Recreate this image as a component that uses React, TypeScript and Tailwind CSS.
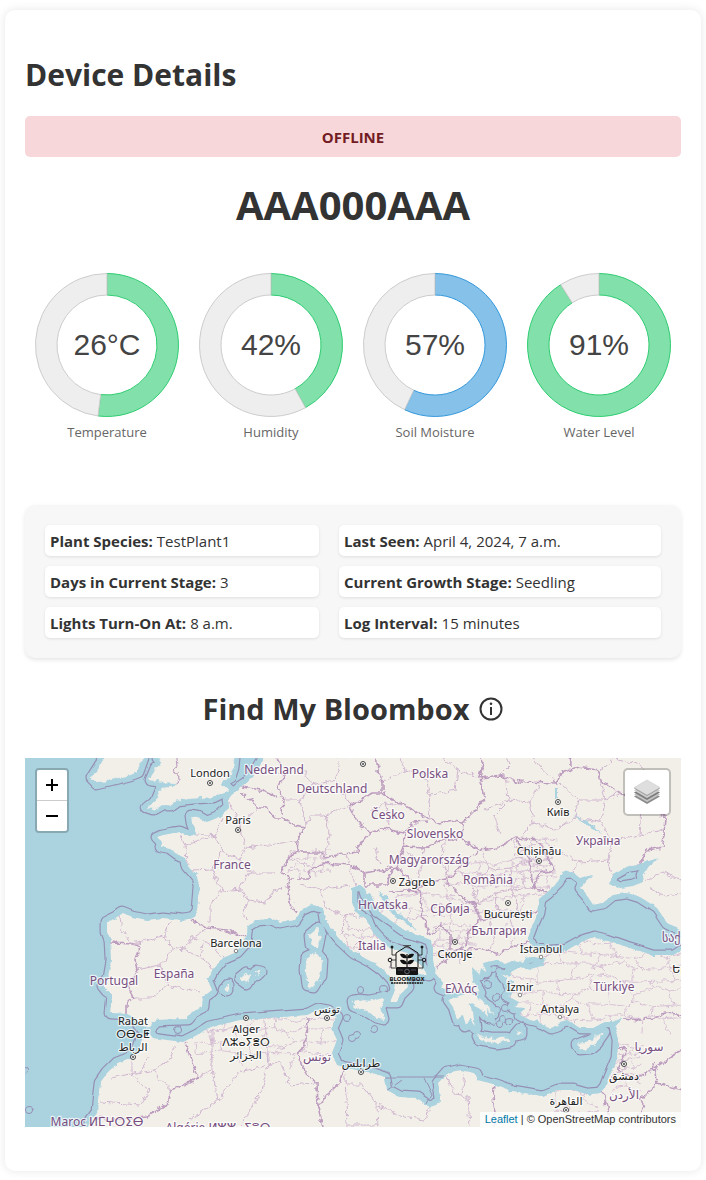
import React from "react";

type Point = [number, number];

const GREEN = { fill: "#82e0aa", stroke: "#2ecc71" };
const BLUE = { fill: "#85c1e9", stroke: "#3498db" };

const gauges = [
  { label: "Temperature", text: "26°C", share: 0.52, tone: GREEN },
  { label: "Humidity", text: "42%", share: 0.42, tone: GREEN },
  { label: "Soil Moisture", text: "57%", share: 0.57, tone: BLUE },
  { label: "Water Level", text: "91%", share: 0.91, tone: GREEN },
];

const details = [
  ["Plant Species:", "TestPlant1"],
  ["Last Seen:", "April 4, 2024, 7 a.m."],
  ["Days in Current Stage:", "3"],
  ["Current Growth Stage:", "Seedling"],
  ["Lights Turn-On At:", "8 a.m."],
  ["Log Interval:", "15 minutes"],
];

function ringSegment(from: number, to: number) {
  const outer = 71.5;
  const inner = 50;
  const at = (r: number, t: number) => {
    const a = t * Math.PI * 2;
    return `${(72 + r * Math.sin(a)).toFixed(2)} ${(72 - r * Math.cos(a)).toFixed(2)}`;
  };
  const large = to - from > 0.5 ? 1 : 0;
  return `M${at(outer, from)}A${outer} ${outer} 0 ${large} 1 ${at(outer, to)}L${at(inner, to)}A${inner} ${inner} 0 ${large} 0 ${at(inner, from)}Z`;
}

function Gauge({ label, text, share, tone }: (typeof gauges)[number]) {
  return (
    <div className="flex flex-col items-center">
      <div className="grid place-items-center">
        <svg viewBox="0 0 144 144" className="col-start-1 row-start-1 size-36" aria-hidden="true">
          <path d={ringSegment(0, share)} fill={tone.fill} stroke={tone.stroke} />
          <path d={ringSegment(share, 1)} fill="#eeeeee" stroke="#cccccc" />
        </svg>
        <span className="col-start-1 row-start-1 font-['Liberation_Sans',sans-serif] text-[30px] leading-8 text-[#444]">
          {text}
        </span>
      </div>
      <span className="mt-1 text-[13px] leading-[22px] text-[#666]">{label}</span>
    </div>
  );
}

/* ---- Map data ---- */

const ATLANTIC_MED =
  "M0 735L263 735 263 760 257 770 252 776 246 783 240 787 233 793 228 800 229 808 222 814 217 818 207 822 198 817 191 816 192 823 196 834 187 835 180 832 173 833 163 835 157 837 162 842 160 847 170 849 178 855 185 858 187 865 192 871 197 877 199 886 198 897 197 910 193 918 183 920 163 918 147 920 133 917 123 913 117 917 107 922 107 932 110 940 111 960 108 977 103 987 107 992 112 995 110 1013 127 1014 135 1018 142 1028 150 1027 157 1020 187 1019 193 1012 202 1007 203 997 212 990 208 980 213 970 223 958 237 952 246 942 248 926 258 920 270 919 280 923 295 920 302 910 313 905 323 908 325 920 330 928 340 940 353 952 372 962 383 970 392 980 395 990 390 1002 397 1002 400 995 408 987 407 978 412 974 420 974 428 976 422 966 407 953 390 948 380 940 372 931 368 920 357 913 352 903 352 888 360 885 364 888 366 895 370 893 374 904 379 912 390 920 407 932 423 937 430 940 433 948 433 960 435 973 443 983 440 988 450 992 465 994 455 997 448 1000 453 1007 457 1020 463 1015 466 1026 470 1019 475 1027 473 1012 469 1003 480 1009 488 1018 487 1008 482 1000 472 993 480 992 476 985 473 980 472 967 480 975 481 968 487 973 483 963 497 960 505 964 512 961 523 963 527 958 535 957 545 960 541 966 530 969 520 967 511 972 509 979 514 982 508 985 512 993 507 996 519 1002 514 1007 523 1008 520 1015 530 1020 538 1022 550 1029 558 1027 560 1022 567 1020 580 1028 593 1028 605 1022 613 1022 622 1018 615 1027 618 1040 617 1057 605 1087 600 1093 587 1094 573 1090 557 1090 542 1096 513 1091 497 1085 478 1080 475 1073 460 1070 447 1073 438 1083 440 1100 436 1105 430 1107 417 1098 400 1097 387 1090 385 1077 373 1073 347 1068 337 1065 332 1053 337 1040 332 1028 337 1017 328 1012 317 1010 307 1015 267 1018 240 1020 210 1027 197 1035 183 1042 167 1040 153 1038 148 1032 142 1038 138 1050 130 1058 117 1063 107 1073 100 1083 98 1100 97 1112 90 1122 78 1150 0 1150Z";
const BLACK_SEA =
  "M528 938L532 927 538 913 540 898 548 892 557 883 563 873 572 872 580 878 593 875 583 883 580 888 588 897 593 905 603 903 613 895 627 893 640 897 657 908 667 923 705 944 705 949 681 950 673 955 653 955 627 947 607 940 594 937 585 940 567 950 550 951 538 950 532 947Z";
const AZOV = "M610 883L613 875 627 867 637 865 658 858 650 865 642 875 643 882 633 886 620 888Z";
const ISLANDS = [
  "M170 740L158 758 163 765 155 768 150 780 167 782 177 783 173 787 162 788 157 800 147 808 153 810 162 805 170 805 177 800 197 798 213 797 228 790 220 782 230 777 233 768 236 740Z",
  "M104 740L102 762 92 778 97 783 110 780 130 775 138 772 143 758 143 740Z",
  "M318 928L320 936 317 949 311 944 310 935Z",
  "M307 957L316 953 322 960 321 975 314 987 308 986 306 970Z",
  "M353 1001L360 1000 370 1001 385 998 381 1008 384 1019 376 1017 365 1010 354 1006Z",
  "M240 978L246 973 251 976 247 983Z",
  "M255 971L260 972 257 975Z",
  "M225 989L228 985 228 991Z",
  "M478 1036L490 1038 508 1038 511 1041 497 1043 480 1040Z",
  "M577 1045L590 1040 604 1032 597 1042 590 1048 580 1049Z",
  "M516 1035L521 1029 521 1034Z",
  "M503 976L510 977 507 981Z",
  "M481 1001L489 1006 493 1014 485 1007Z",
];
const ISLETS: Point[] = [
  [496, 997], [497, 1010], [503, 1019], [492, 1022], [500, 1024], [510, 1021], [487, 1015],
  [506, 1008], [494, 970], [488, 984], [500, 972], [347, 1018], [356, 1035], [352, 1038],
  [374, 1029], [361, 990], [383, 990], [177, 1030], [30, 1110], [25, 1070],
];

const NATIONAL =
  "M110 943L133 944 140 948 135 960 137 970 128 987 133 998 127 1003 127 1014M192 920L207 928 227 930 240 935 250 936M240 792L250 800 258 808 267 808 275 818 283 818 290 823 303 827 298 840 297 852 290 857 280 872 290 878 288 887 292 907 297 913M278 750L279 765 283 777 278 787 283 800 282 815M242 787L260 790 277 797M375 750L378 770 382 782 382 793 373 793 363 800 350 805 355 818 370 833 383 828 403 833 413 823 427 822M382 793L392 799 403 805 410 807 427 818 440 823 453 820 463 822 477 808 485 797 480 778 483 763 477 750M370 833L358 847 357 852 325 857 320 852 297 852M290 878L308 878 311 870 323 863 350 865 365 873 397 867 403 847 405 833M365 873L365 885 387 885 390 875 397 867 417 887 440 880 450 878 465 862 480 850M403 847L427 848 440 840 460 838 480 850 497 848 515 838 537 840 548 857 553 870 540 873 533 888 530 860 515 838M390 892L405 890 420 892 423 917 430 935M417 887L421 895M445 880L462 897 475 905 480 920 500 917 520 916 538 912M480 920L470 930 465 945 457 950 436 968M457 950L480 948 500 955 510 946 530 943M533 888L548 892M463 822L462 838M480 778L500 775 520 782 557 783 562 773 577 767 598 770 603 783 620 792 642 806 665 817 663 847 647 850 640 864M570 750L571 767M430 935L441 925 450 935 450 950M185 1042L192 1063 198 1077 187 1083 172 1090 168 1103 147 1117 120 1120 95 1118M308 1017L307 1037 298 1055 305 1073 317 1083 318 1107 323 1127M343 1068L340 1083 328 1093 318 1107M495 1085L493 1097 495 1113 495 1130M623 1018L640 1020 653 1018 665 1013 690 1015M618 1048L627 1049 621 1062 617 1070M603 1093L611 1120M617 1070L635 1080 655 1068 681 1050M653 1063L657 1083 640 1100 645 1107 625 1127M657 1083L690 1092";
const REGIONAL =
  "M120 917L122 930 133 944M133 944L150 940 165 935 170 920M165 935L172 948 185 950 192 938 207 928M172 948L160 965 137 970M185 950L205 960 213 970M160 965L168 985 152 998 133 998M168 985L200 992M192 938L205 940 214 947 223 958M205 940L200 952 205 960M180 835L186 845 215 836M186 845L187 865M196 834L215 836 222 818M215 836L222 852 240 860 245 848 240 825 228 800M222 852L212 870 192 871M212 870L222 890 210 905 210 922M222 890L240 888 250 873 240 860M250 873L275 873M245 848L270 845 297 840M240 888L248 900 266 902 275 890 288 887M248 900L242 914 250 920M240 825L258 808M303 770L312 785 300 800 283 800M312 785L335 780 340 765 335 750M335 780L350 805M300 800L306 825M312 815L325 815 330 835 325 855M312 815L303 827M325 815L350 805M350 865L355 885M300 885L320 890 350 885M320 890L325 907M325 907L345 915 357 913M345 915L342 935M360 940L352 948M393 958L388 970M410 962L405 975M400 750L405 770 382 782M405 770L425 775 430 795 427 818M430 795L455 790 458 770 440 755M458 770L480 778M370 812L385 803 403 805M385 803L390 825M425 848L420 870 417 887M445 840L440 860 450 878M405 852L425 862 440 860M375 848L380 865M345 855L350 865M505 775L508 800 485 810M508 800L530 802 540 785M530 802L533 822 520 838M533 822L555 830 575 818 578 800 560 783M575 818L600 822 605 800 598 770M600 822L612 840 640 835 642 806M612 840L608 860 580 862 555 850M608 860L613 875M580 862L572 872M578 800L605 800 620 792M480 850L490 870 470 880 478 905M490 870L510 868 530 860M510 868L512 890 533 888M512 890L495 893 478 905M495 893L500 917M512 890L520 916M490 920L495 940 490 950M510 918L515 935 510 946M640 835L663 830M650 888L665 896 690 893M645 880L662 872 681 880M110 1078L140 1072 150 1058M132 1060L132 1075 150 1090 140 1105 100 1102M132 1075L155 1070 170 1060 175 1045M155 1070L160 1080 172 1090M212 1030L212 1070 198 1077M212 1070L218 1100 190 1120M218 1100L240 1072 265 1066M265 1020L268 1066 262 1090 240 1127M268 1066L280 1062 290 1085 315 1083M345 1075L347 1125M347 1085L362 1085 377 1105 378 1127M347 1125L378 1125M377 1105L400 1115 425 1120 430 1107M447 1075L455 1095 468 1097 470 1127M465 1075L462 1095M505 750L510 765 500 775M530 755L540 768 557 783M600 770L615 758 640 765 650 780 642 806M510 800L495 815 500 835";

/* Admin districts: a honeycomb whose corners are nudged by a fixed hash. */
const districts = [
  { x: 290, y: 852, w: 32, h: 20, size: 8 },
  { x: 510, y: 965, w: 165, h: 58, size: 16 },
  { x: 450, y: 862, w: 90, h: 54, size: 15 },
  { x: 515, y: 840, w: 34, h: 42, size: 8 },
  { x: 195, y: 1020, w: 140, h: 44, size: 14 },
  { x: 435, y: 925, w: 36, h: 32, size: 8 },
  { x: 395, y: 895, w: 50, h: 30, size: 15 },
  { x: 545, y: 940, w: 130, h: 25, size: 18 },
  { x: 345, y: 915, w: 35, h: 35, size: 14 },
  { x: 615, y: 1045, w: 18, h: 45, size: 9 },
  { x: 555, y: 1092, w: 40, h: 30, size: 14 },
];

function honeycomb({ x, y, w, h, size }: (typeof districts)[number]) {
  const corner = (c: number, r: number) => {
    const n = Math.sin(c * 127.1 + r * 311.7 + x) * 43758.5;
    const m = Math.sin(c * 269.5 + r * 183.3 + y) * 28001.8;
    const px = x + c * size + (n - Math.floor(n) - 0.5) * size * 0.8;
    const py = y + r * size * 0.8 + (m - Math.floor(m) - 0.5) * size * 0.6;
    return `${px.toFixed(1)} ${py.toFixed(1)}`;
  };
  let d = "";
  for (let r = 0; r * size * 0.8 <= h; r++) {
    for (let c = 0; c * size <= w; c++) {
      d += `M${corner(c, r)}L${corner(c + 1, r)}`;
      if ((c + r) % 2 === 0) d += `M${corner(c, r)}L${corner(c, r + 1)}`;
    }
  }
  return d;
}

const countries: [string, number, number][] = [
  ["Nederland", 274, 774], ["Deutschland", 332, 793], ["Polska", 430, 778], ["Česko", 388, 819],
  ["Slovensko", 435, 838], ["Magyarország", 429, 864], ["Україна", 598, 845], ["România", 488, 884],
  ["France", 232, 869], ["Hrvatska", 383, 909], ["Србија", 450, 913], ["България", 499, 935],
  ["Italia", 372, 950], ["España", 174, 978], ["Portugal", 114, 985], ["Ελλάς", 461, 993],
  ["Türkiye", 614, 991], ["تونس", 317, 1061], ["سوريا", 649, 1051], ["الأردن", 624, 1099],
  ["Maroc ⵍⵎⵖⵔⵉⴱ", 97, 1126], ["Algérie ⵍⵣⵣⴰⵢⴻⵔ", 218, 1132], ["საქართველო", 701, 942],
];
const cities: [string, number, number][] = [
  ["London", 210, 777], ["Paris", 238, 824], ["Berlin", 364, 757], ["Київ", 558, 816],
  ["Chișinău", 539, 855], ["Zagreb", 417, 886], ["București", 508, 918], ["Barcelona", 236, 947],
  ["Скопје", 455, 958], ["İstanbul", 541, 953], ["İzmir", 520, 991], ["Antalya", 560, 1013],
  ["Rabat", 133, 1025], ["ⵔⴱⴰⵟ", 133, 1038], ["الرباط", 133, 1051], ["Alger", 246, 1033],
  ["ⴷⵣⴰⵢⴻⵔ", 246, 1046], ["الجزائر", 246, 1059], ["تونس", 327, 1013], ["طرابلس", 361, 1067],
  ["دمشق", 624, 1080], ["القاهرة", 566, 1105], ["Երևան", 693, 973],
];
const capitals: Point[] = [
  [210, 783], [238, 830], [363, 764], [558, 802], [539, 861], [393, 881], [508, 903], [455, 942],
  [133, 1057], [246, 1018], [327, 1018], [361, 1072], [624, 1064], [566, 1110],
];
const towns: Point[] = [[236, 951], [541, 957], [520, 995], [560, 1017]];

function BloomboxMarker() {
  return (
    <g transform="translate(387 942)" stroke="#111" fill="none">
      <path d="M9 25V11L20 4l11 7v14" strokeWidth="1" />
      <path d="M20 26V12" strokeWidth="1.200" />
      <path d="M20 16q-6 1-7-4q6-1 7 4Zm0 0q6 1 7-4q-6-1-7 4ZM20 22q-6 1-7-4q6-1 7 4Zm0 0q6 1 7-4q-6-1-7 4Z" fill="#111" stroke="none" />
      <path d="M16 3.500h8M17.500 5h5" strokeWidth="1" stroke="#555" />
      <path d="M9 13H5V6M31 13h4V6M5 18h4M35 18h-4M4 20v6h5M36 20v6h-5" strokeWidth=".8" />
      <circle cx="3" cy="18" r="1.800" />
      <circle cx="37" cy="18" r="1.800" />
      <circle cx="5" cy="5" r="1" fill="#111" />
      <circle cx="35" cy="5" r="1" fill="#111" />
      <rect x="9" y="25" width="22" height="8" rx="1" fill="#151515" stroke="none" />
      <circle cx="20" cy="29.500" r="2.300" stroke="#667" />
      <path d="M11 28h5M24 28h5" stroke="#556" strokeWidth=".8" />
      <text x="20" y="39" textAnchor="middle" fontSize="6" fontWeight="700" fill="#111" stroke="none">
        BLOOMBOX
      </text>
      <path d="M4 41h32" strokeWidth="1.400" strokeDasharray="2 .6" />
    </g>
  );
}

function MapCanvas() {
  const waters = [ATLANTIC_MED, BLACK_SEA, AZOV];
  return (
    <svg
      viewBox="25 758 656 369"
      preserveAspectRatio="xMidYMid slice"
      className="block h-[369px] w-full font-['Noto_Sans','DejaVu_Sans',sans-serif]"
      role="img"
      aria-label="Map of Europe and the Mediterranean"
    >
      <defs>
        <clipPath id="water">
          {waters.map((d) => (
            <path key={d} d={d} />
          ))}
        </clipPath>
        <filter id="rough" filterUnits="userSpaceOnUse" x="10" y="743" width="686" height="399" colorInterpolationFilters="sRGB">
          <feTurbulence type="fractalNoise" baseFrequency="0.16" numOctaves="3" seed="4" />
          <feDisplacementMap in="SourceGraphic" scale="7" xChannelSelector="R" yChannelSelector="G" />
        </filter>
        <filter id="wavy" filterUnits="userSpaceOnUse" x="10" y="743" width="686" height="399" colorInterpolationFilters="sRGB">
          <feTurbulence type="fractalNoise" baseFrequency="0.05" numOctaves="1" seed="4" />
          <feDisplacementMap in="SourceGraphic" scale="5" xChannelSelector="R" yChannelSelector="G" />
        </filter>
      </defs>
      <rect x="25" y="758" width="656" height="369" fill="#f2efe9" />
      <g filter="url(#rough)" strokeLinejoin="round">
        <rect x="0" y="730" width="710" height="420" fill="#f2efe9" />
        <g fill="none" stroke="#d0b6d0">
          <path d={REGIONAL} />
          {districts.map((area) => (
            <path key={`${area.x}-${area.y}`} d={honeycomb(area)} strokeWidth=".8" />
          ))}
        </g>
        <path d={NATIONAL} fill="none" stroke="#bd9dbf" strokeWidth="1.600" />
        <g fill="#aad3df">
          {waters.map((d) => (
            <path key={d} d={d} />
          ))}
          <path d="M555 789l3 0 0 10-3 0ZM574 817l12 3 16 13-14-7ZM379 891l6 4 8 14 12 9 12 11-20-10-12-14Z" />
        </g>
      </g>
      <g clipPath="url(#water)">
        <g filter="url(#wavy)" strokeLinejoin="round">
          <g fill="#968fb4" stroke="#968fb4" strokeWidth="13">
            {waters.map((d) => (
              <path key={d} d={d} fill="none" />
            ))}
            {ISLANDS.map((d) => (
              <path key={d} d={d} />
            ))}
            {ISLETS.map(([x, y]) => (
              <circle key={`${x}-${y}`} cx={x} cy={y} r="3.500" strokeWidth="1" />
            ))}
          </g>
          <g fill="#aad3df" stroke="#aad3df" strokeWidth="10.600">
            {waters.map((d) => (
              <path key={d} d={d} fill="none" />
            ))}
            {ISLANDS.map((d) => (
              <path key={d} d={d} />
            ))}
            {ISLETS.map(([x, y]) => (
              <circle key={`${x}-${y}`} cx={x} cy={y} r="2.800" strokeWidth=".5" />
            ))}
          </g>
          <path d="M385 1077H445M402 1080L375 1100M424 1078L432 1095 425 1107" fill="none" stroke="#968fb4" />
        </g>
      </g>
      <g filter="url(#rough)">
        {ISLANDS.map((d) => (
          <path key={d} d={d} fill="#f2efe9" stroke="#f2efe9" strokeWidth=".5" />
        ))}
        <path d="M176 750l2 16-5 4 7 8-3 6" fill="none" stroke="#c0a2c1" strokeWidth="1.200" />
      </g>
      {capitals.map(([x, y]) => (
        <g key={`${x}-${y}`}>
          <circle cx={x} cy={y} r="2.500" fill="#fff" stroke="#444" />
          <circle cx={x} cy={y} r="1" fill="#444" />
        </g>
      ))}
      {towns.map(([x, y]) => (
        <circle key={`${x}-${y}`} cx={x} cy={y} r="1.800" fill="#fff" stroke="#666" strokeWidth=".8" />
      ))}
      <g textAnchor="middle" stroke="#fff" strokeOpacity=".7" strokeWidth="2.500" strokeLinejoin="round" paintOrder="stroke">
        <g fill="#774f7f" fontSize="12">
          {countries.map(([name, x, y]) => (
            <text key={name} x={x} y={y}>
              {name}
            </text>
          ))}
        </g>
        <g fill="#222" fontSize="11">
          {cities.map(([name, x, y]) => (
            <text key={name} x={x} y={y}>
              {name}
            </text>
          ))}
        </g>
      </g>
      <BloomboxMarker />
    </svg>
  );
}

function LayersIcon() {
  return (
    <svg viewBox="0 0 26 26" className="size-[26px]" aria-hidden="true">
      <path d="M0 17.500L13 10l13 7.500L13 25Z" fill="#8b8b8b" />
      <path d="M0 15.500L13 8l13 7.500L13 23Z" fill="#c4c4c4" />
      <path d="M0 13.500L13 6l13 7.500L13 21Z" fill="#7d7d7d" />
      <path d="M0 11.500L13 4l13 7.500L13 19Z" fill="#cfcfcf" />
      <path d="M0 9.500L13 2l13 7.500L13 17Z" fill="#8f8f8f" />
      <path d="M0 8.500L13 1l13 7.500L13 16Z" fill="#dedede" stroke="#c8c8c8" strokeWidth=".5" />
    </svg>
  );
}

function MapPanel() {
  return (
    <div className="relative overflow-hidden">
      <MapCanvas />
      <div className="absolute top-2.5 left-2.5 flex flex-col rounded-sm border-2 border-black/20 bg-clip-padding text-black">
        <button
          type="button"
          aria-label="Zoom in"
          className="grid h-[31px] w-[30px] place-items-center rounded-t-xs border-b border-[#ccc] bg-white"
        >
          <svg viewBox="0 0 14 14" className="size-3.5" aria-hidden="true">
            <path d="M1 7h12M7 1v12" stroke="#000" strokeWidth="2" />
          </svg>
        </button>
        <button type="button" aria-label="Zoom out" className="grid size-[30px] place-items-center rounded-b-xs bg-white">
          <svg viewBox="0 0 14 14" className="size-3.5" aria-hidden="true">
            <path d="M1 7h12" stroke="#000" strokeWidth="2" />
          </svg>
        </button>
      </div>
      <button
        type="button"
        aria-label="Layers"
        className="absolute top-2.5 right-2.5 grid size-12 place-items-center rounded-[5px] border-2 border-black/20 bg-white bg-clip-padding"
      >
        <LayersIcon />
      </button>
      <div className="absolute right-0 bottom-0 bg-white/80 px-[5px] font-['Liberation_Sans',sans-serif] text-[11px] leading-[15px] text-[#333]">
        <a href="#leaflet" className="text-[#0078a8]">
          Leaflet
        </a>{" "}
        | © OpenStreetMap contributors
      </div>
    </div>
  );
}

export default function App() {
  return (
    <div className="bg-white px-[5px] py-2.5 font-['Open_Sans','Noto_Sans',sans-serif] text-[#333]">
      <main className="rounded-[10px] bg-white px-5 pt-11 pb-11 shadow-[0_0_10px_rgba(0,0,0,0.1)]">
        <h1 className="text-[30px] leading-[42px] font-bold">Device Details</h1>
        <p className="mt-5 rounded-[5px] bg-[#f8d7da] pt-[11px] pb-[9px] text-center text-[15px] leading-[21px] font-bold text-[#721c24]">
          OFFLINE
        </p>
        <h2 className="mt-5 text-center text-[40px] leading-[56px] font-bold">AAA000AAA</h2>
        <section className="mt-10 grid grid-cols-4" aria-label="Readings">
          {gauges.map((gauge) => (
            <Gauge key={gauge.label} {...gauge} />
          ))}
        </section>
        <dl className="mt-[62px] grid grid-cols-[274fr_322fr] gap-x-5 gap-y-2.5 rounded-[10px] bg-[#f7f7f7] p-5 text-[15px] leading-[21px] shadow-[0_2px_4px_rgba(0,0,0,0.1)]">
          {details.map(([term, value]) => (
            <div key={term} className="flex gap-1 rounded-[5px] bg-white px-[5px] pt-1.5 pb-1 shadow-[0_1px_3px_rgba(0,0,0,0.1)]">
              <dt className="font-bold">{term}</dt>
              <dd>{value}</dd>
            </div>
          ))}
        </dl>
        <h2 className="mt-[30px] mb-7 flex items-center justify-center gap-2.5 text-[29px] leading-[42px] font-bold">
          Find My Bloombox
          <svg viewBox="0 0 24 24" className="size-6" aria-label="Info" role="img">
            <circle cx="12" cy="12" r="10.500" fill="none" stroke="#333" strokeWidth="2" />
            <path d="M12 10v8" stroke="#333" strokeWidth="2" />
            <circle cx="12" cy="6.800" r="1.300" fill="#333" />
          </svg>
        </h2>
        <MapPanel />
      </main>
    </div>
  );
}
